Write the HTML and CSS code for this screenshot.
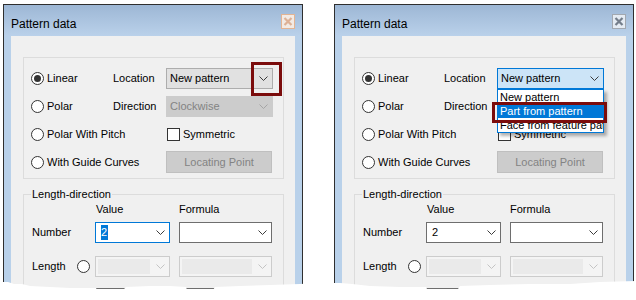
FILE: index.html
```html
<html>
<head>
    <title>Pattern data</title>
    <link rel="stylesheet" href="styles.css">
</head>
<body>
    <div class="shots">

        <!-- left: closed combo, arrow marked -->
        <div class="dlg">
            <div class="titlebar">
                <span class="title">Pattern data</span>
                <span class="close close-hot">
                    <svg width="12" height="13" viewBox="0 0 12 13"><path d="M2.5 3 L9.5 10 M9.5 3 L2.5 10" stroke="currentColor" stroke-width="2.2" fill="none"/></svg>
                </span>
            </div>
            <div class="client">
                <div class="group">
                    <div class="opt"><span class="radio on"></span>Linear</div>
                    <span class="lbl">Location</span>
                    <div class="combo-wrap">
                        <div class="combo">
                            <span>New pattern</span>
                            <svg class="chev" width="9" height="5" viewBox="0 0 9 5"><path d="M0.5 0.5 L4.5 4.5 L8.5 0.5" fill="none" stroke="currentColor"/></svg>
                        </div>
                        <div class="mark mark-arrow"></div>
                    </div>

                    <div class="opt"><span class="radio"></span>Polar</div>
                    <span class="lbl">Direction</span>
                    <div class="combo off">
                        <span>Clockwise</span>
                        <svg class="chev" width="9" height="5" viewBox="0 0 9 5"><path d="M0.5 0.5 L4.5 4.5 L8.5 0.5" fill="none" stroke="currentColor"/></svg>
                    </div>

                    <div class="opt"><span class="radio"></span>Polar With Pitch</div>
                    <div class="chk"><span class="box"></span>Symmetric</div>

                    <div class="opt"><span class="radio"></span>With Guide Curves</div>
                    <div class="btn">Locating Point</div>
                </div>

                <fieldset class="group2">
                    <legend>Length-direction</legend>
                    <div class="frow head">
                        <span></span>
                        <span class="hd">Value</span>
                        <span>Formula</span>
                    </div>
                    <div class="frow num">
                        <span>Number</span>
                        <div class="combo edit focus">
                            <span class="picked">2</span>
                            <svg class="chev" width="9" height="5" viewBox="0 0 9 5"><path d="M0.5 0.5 L4.5 4.5 L8.5 0.5" fill="none" stroke="currentColor"/></svg>
                        </div>
                        <div class="combo edit">
                            <span></span>
                            <svg class="chev" width="9" height="5" viewBox="0 0 9 5"><path d="M0.5 0.5 L4.5 4.5 L8.5 0.5" fill="none" stroke="currentColor"/></svg>
                        </div>
                    </div>
                    <div class="frow len">
                        <div class="len-lbl">Length<span class="radio"></span></div>
                        <div class="combo dis">
                            <span class="field"></span>
                            <svg class="chev" width="9" height="5" viewBox="0 0 9 5"><path d="M0.5 0.5 L4.5 4.5 L8.5 0.5" fill="none" stroke="currentColor"/></svg>
                        </div>
                        <div class="combo dis">
                            <span class="field"></span>
                            <svg class="chev" width="9" height="5" viewBox="0 0 9 5"><path d="M0.5 0.5 L4.5 4.5 L8.5 0.5" fill="none" stroke="currentColor"/></svg>
                        </div>
                    </div>
                    <div class="frow next">
                        <span></span>
                        <span class="stub"></span>
                        <span class="stub"></span>
                    </div>
                </fieldset>
            </div>
        </div>

        <!-- right: combo opened, item marked -->
        <div class="dlg">
            <div class="titlebar">
                <span class="title">Pattern data</span>
                <span class="close close-idle">
                    <svg width="12" height="13" viewBox="0 0 12 13"><path d="M2.5 3 L9.5 10 M9.5 3 L2.5 10" stroke="currentColor" stroke-width="2.2" fill="none"/></svg>
                </span>
            </div>
            <div class="client">
                <div class="group">
                    <div class="opt"><span class="radio on"></span>Linear</div>
                    <span class="lbl">Location</span>
                    <div class="combo-wrap">
                        <div class="combo focus">
                            <span>New pattern</span>
                            <svg class="chev" width="9" height="5" viewBox="0 0 9 5"><path d="M0.5 0.5 L4.5 4.5 L8.5 0.5" fill="none" stroke="currentColor"/></svg>
                        </div>
                        <div class="list">
                            <div class="item">New pattern</div>
                            <div class="item sel">Part from pattern</div>
                            <div class="item">Face from feature pattern</div>
                        </div>
                        <div class="mark mark-item"></div>
                    </div>

                    <div class="opt"><span class="radio"></span>Polar</div>
                    <span class="lbl">Direction</span>
                    <div class="combo off">
                        <span>Clockwise</span>
                        <svg class="chev" width="9" height="5" viewBox="0 0 9 5"><path d="M0.5 0.5 L4.5 4.5 L8.5 0.5" fill="none" stroke="currentColor"/></svg>
                    </div>

                    <div class="opt"><span class="radio"></span>Polar With Pitch</div>
                    <div class="chk"><span class="box"></span>Symmetric</div>

                    <div class="opt"><span class="radio"></span>With Guide Curves</div>
                    <div class="btn">Locating Point</div>
                </div>

                <fieldset class="group2">
                    <legend>Length-direction</legend>
                    <div class="frow head">
                        <span></span>
                        <span class="hd">Value</span>
                        <span>Formula</span>
                    </div>
                    <div class="frow num">
                        <span>Number</span>
                        <div class="combo edit">
                            <span>2</span>
                            <svg class="chev" width="9" height="5" viewBox="0 0 9 5"><path d="M0.5 0.5 L4.5 4.5 L8.5 0.5" fill="none" stroke="currentColor"/></svg>
                        </div>
                        <div class="combo edit">
                            <span></span>
                            <svg class="chev" width="9" height="5" viewBox="0 0 9 5"><path d="M0.5 0.5 L4.5 4.5 L8.5 0.5" fill="none" stroke="currentColor"/></svg>
                        </div>
                    </div>
                    <div class="frow len">
                        <div class="len-lbl">Length<span class="radio"></span></div>
                        <div class="combo dis">
                            <span class="field"></span>
                            <svg class="chev" width="9" height="5" viewBox="0 0 9 5"><path d="M0.5 0.5 L4.5 4.5 L8.5 0.5" fill="none" stroke="currentColor"/></svg>
                        </div>
                        <div class="combo dis">
                            <span class="field"></span>
                            <svg class="chev" width="9" height="5" viewBox="0 0 9 5"><path d="M0.5 0.5 L4.5 4.5 L8.5 0.5" fill="none" stroke="currentColor"/></svg>
                        </div>
                    </div>
                    <div class="frow next">
                        <span></span>
                        <span class="stub"></span>
                        <span class="stub"></span>
                    </div>
                </fieldset>
            </div>
        </div>
    </div>

    <!-- torn paper edge over the bottom of both shots -->
    <svg class="tear" width="636" height="22" viewBox="0 0 636 22">
        <path d="M0 4 L8 4 L14 6 L22 6 L30 8 L50 9 L70 10 L96 10 L97 12 L123 12 L126 9 L150 8 L170 8 L186 9 L187 12 L213 12 L215 9 L240 8 L270 7 L300 6 L320 5 L340 5 L352 6 L370 8 L400 9 L426 9 L427 11 L458 11 L460 8 L490 7 L530 6 L570 6 L600 4 L636 3 L636 22 L0 22 Z" fill="#ffffff"/>
    </svg>
</body>
</html>
```

FILE: styles.css
```css
* {
    margin: 0px;
    padding: 0px;
    box-sizing: border-box;
}

body
{
    background-color: #ffffff;
    font-family: "Liberation Sans", Arial, sans-serif;
    font-size: 11px;
    line-height: 13px;
    color: #000000;
    height: 300px;
    overflow: hidden;
    position: relative;
}

.shots
{
    display: flex;
    gap: 31px;
    padding: 4px 0 0 3px;
}

.dlg
{
    width: 300px;
    height: 310px;
    border: 1px solid #2f2f2f;
    background-color: #b9d1ea;
    display: flex;
    flex-direction: column;
    overflow: hidden;
}

.titlebar
{
    height: 31px;
    flex: none;
    display: flex;
    justify-content: space-between;
    align-items: flex-start;
    padding: 0 7px;
    background: linear-gradient(#9db7d5, #bad1ea);
}

.title
{
    font-size: 12px;
    line-height: 14px;
    margin-top: 12px;
}

.close
{
    width: 14px;
    height: 15px;
    margin-top: 9px;
    border: 1px solid;
    display: flex;
    align-items: center;
    justify-content: center;
}

.close-hot
{
    border-color: #e3b493;
    background-color: #f3ebe5;
    color: #ddb196;
}

.close-idle
{
    border-color: #a2a8b0;
    background-color: #e4ebf3;
    color: #747e8b;
}

.client
{
    flex: 1;
    background-color: #f0f0f0;
    margin: 0 7px;
    padding: 21px 11px 0 12px;
}

/* first group: pattern type */
.group
{
    border: 1px solid #dcdcdc;
    display: grid;
    grid-template-columns: 82px 53px 107px;
    grid-auto-rows: 21px;
    row-gap: 7px;
    align-items: center;
    padding: 10px 0 5px 7px;
}

.opt
{
    grid-column: 1;
    display: flex;
    align-items: center;
    gap: 3px;
    white-space: nowrap;
}

.radio
{
    width: 13px;
    height: 13px;
    flex: none;
    border: 1px solid #333333;
    border-radius: 50%;
    background-color: #ffffff;
    display: flex;
    align-items: center;
    justify-content: center;
}

.radio.on::after
{
    content: "";
    width: 7px;
    height: 7px;
    border-radius: 50%;
    background-color: #333333;
}

.combo-wrap
{
    position: relative;
    height: 21px;
}

.combo
{
    height: 21px;
    border: 1px solid #adadad;
    background-color: #e1e1e1;
    display: flex;
    align-items: center;
    justify-content: space-between;
    padding: 0 4px 0 3px;
    white-space: nowrap;
    color: #000000;
}

.chev
{
    flex: none;
    color: #3c3c3c;
}

.combo.focus
{
    background-color: #cce4f7;
    border-color: #0078d7;
}

.combo.off
{
    background-color: #cccccc;
    border-color: #cccccc;
    color: #838383;
}

.combo.off .chev
{
    color: #a5a5a5;
}

.combo.edit
{
    background-color: #ffffff;
    border-color: #6e6e6e;
    padding-left: 5px;
}

.combo.edit.focus
{
    border-color: #0078d7;
}

.picked
{
    background-color: #0078d7;
    color: #ffffff;
    line-height: 15px;
    padding: 0 1px 0 0;
}

.combo.dis
{
    background-color: #f4f4f4;
    border-color: #cccccc;
    padding: 2px 4px 2px 2px;
}

.combo.dis .field
{
    flex: 1;
    height: 100%;
    background-color: #eaeaea;
    margin-right: 6px;
}

.combo.dis .chev
{
    color: #c4c4c4;
}

.chk
{
    grid-column: 3;
    display: flex;
    align-items: center;
    gap: 3px;
    padding-left: 1px;
}

.box
{
    width: 13px;
    height: 13px;
    border: 1px solid #333333;
    background-color: #ffffff;
}

.btn
{
    grid-column: 3;
    width: 106px;
    height: 22px;
    margin-top: -1px;
    border: 1px solid #bfbfbf;
    background-color: #cccccc;
    color: #838383;
    display: flex;
    align-items: center;
    justify-content: center;
}

/* dropdown list of the opened combo */
.list
{
    position: absolute;
    top: 21px;
    left: 0;
    width: 107px;
    height: 44px;
    border: 1px solid #0078d7;
    background-color: #ffffff;
    overflow: hidden;
    box-shadow: 3px 3px 3px rgba(0, 0, 0, 0.3);
    z-index: 2;
}

.item
{
    line-height: 14px;
    padding-left: 2px;
    white-space: nowrap;
}

.item.sel
{
    background-color: #0078d7;
    color: #ffffff;
}

/* red callout frames */
.mark
{
    position: absolute;
    border: 3px solid #7b0c0c;
    z-index: 3;
}

.mark-arrow
{
    left: 85px;
    top: -6px;
    width: 31px;
    height: 34px;
}

.mark-item
{
    left: -5px;
    top: 34px;
    width: 115px;
    height: 21px;
}

/* second group: length direction */
.group2
{
    border: 1px solid #dcdcdc;
    margin-top: 9px;
    padding: 2px 0 0 8px;
    min-width: 0;
}

.group2 legend
{
    padding: 0 1px;
    margin-left: -1px;
    line-height: 13px;
}

.frow
{
    display: grid;
    grid-template-columns: 54px 75px 93px;
    column-gap: 9px;
    align-items: center;
}

.frow.head
{
    height: 13px;
}

.hd
{
    padding-left: 1px;
}

.frow.num
{
    margin-top: 6px;
}

.frow.len
{
    margin-top: 13px;
}

.len-lbl
{
    display: flex;
    align-items: center;
    justify-content: space-between;
    padding-right: 5px;
    margin-right: -9px;
}

.frow.next
{
    margin-top: 11px;
}

.stub
{
    height: 21px;
    border: 1px solid #6e6e6e;
    background-color: #ffffff;
}

.tear
{
    position: absolute;
    left: 0;
    top: 278px;
}
```
